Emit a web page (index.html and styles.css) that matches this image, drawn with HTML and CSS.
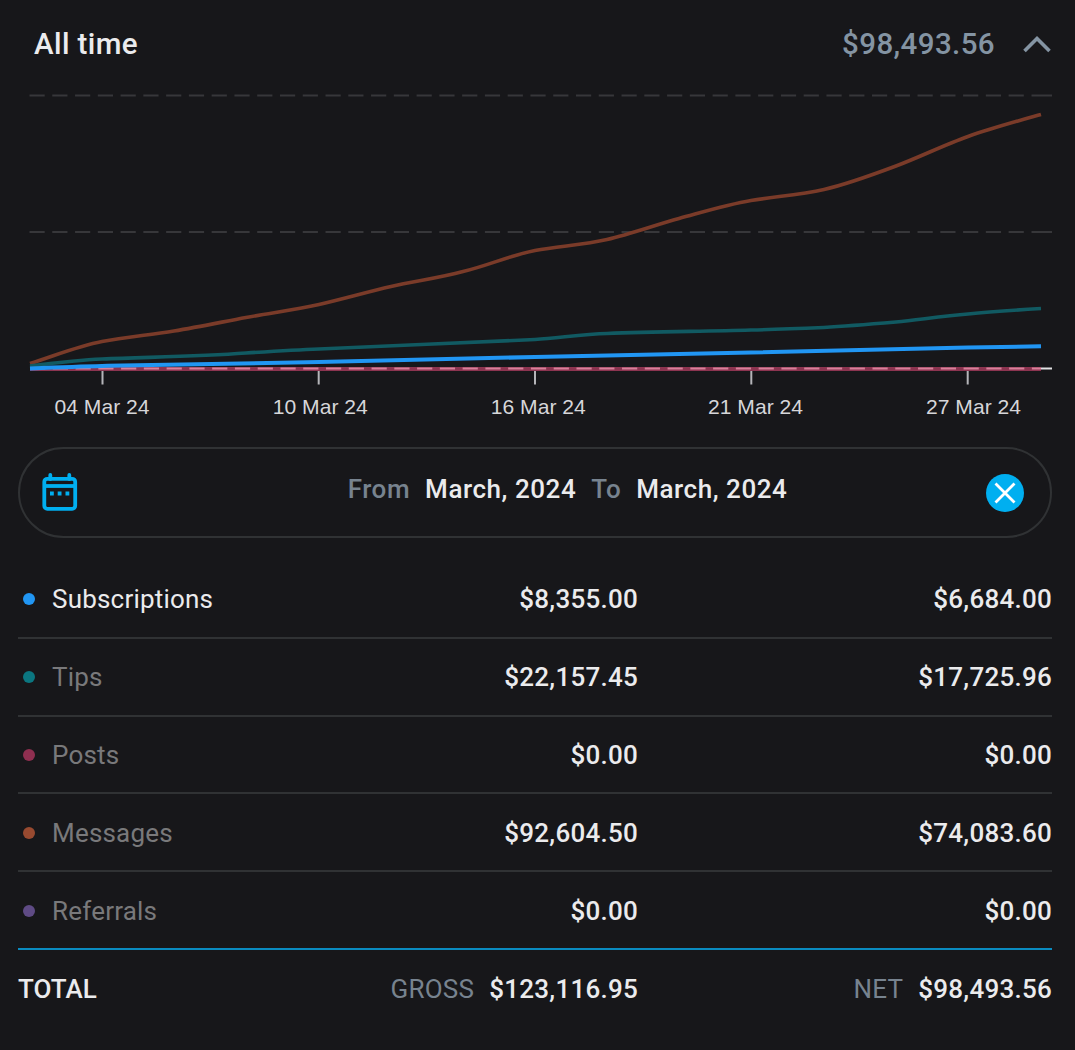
FILE: index.html
```html
<!DOCTYPE html>
<html lang="en">
<head>
  <meta charset="UTF-8" />
  <meta name="viewport" content="width=device-width, initial-scale=1.0" />
  <title>Earnings - All time</title>
  <link rel="stylesheet" href="styles.css">
</head>
<body>
  <main class="panel">
    <header class="panel-header">
      <h1 class="panel-title">All time</h1>
      <div class="panel-sum">
        <span class="sum-value">$98,493.56</span>
        <svg class="chevron" width="30" height="20" viewBox="0 0 30 20">
          <path d="M2.5 17 L15 4.500 L27.5 17" />
        </svg>
      </div>
    </header>

    <svg class="chart" width="1075" height="350" viewBox="0 80 1075 350">
      <!-- grid -->
      <path class="grid" d="M29.5 95.5 H1030" />
      <path class="grid-end" d="M1031.5 95.5 H1052" />
      <path class="grid" d="M29.5 232 H1030" />
      <path class="grid-end" d="M1031.5 232 H1052" />

      <!-- series -->
      <path class="line messages" d="M30 363.5 C54 356 78 346 102 341.5 C126 337 150 335 174 331 C198 327 222 322 246 317.5 C270 313 294 310 319 304.5 C343 299 367 292 391 286.5 C415 281 439 278 463 271.5 C487 266 511 255 535 250.5 C559 246 583 245 607 239.5 C631 234 655 225 679 218.5 C703 212 727 204.5 751 200.5 C775 196.5 800 195 824 189.5 C848 184 872 175 896 166 C920 157 944 145 968 136.5 C992 128 1016 121.5 1041 114.5" />
      <path class="line tips" d="M30 366 C54 363 78 360 102 359 C150 357 198 356.5 246 353 C270 351.5 294 350 319 349 C391 345.5 463 343 535 339.5 C559 338 583 334 607 333.5 C655 331.5 703 331.5 751 330 C775 329.5 800 328.5 824 327.5 C848 326 872 324 896 322 C920 319.5 944 316 968 314 C992 311.5 1016 310 1041 308.5" />
      <path class="line posts" d="M30 369 H1041" />
      <path class="axis-dash" d="M30 368.5 H1041" />
      <path class="line subs" d="M30 368.5 C54 367.5 78 366.5 102 366 C174 364 246 363 319 362 C391 360 463 358.5 535 357 C607 355 679 354 751 352.5 C824 351 896 349 968 347.5 L1041 346.3" />

      <!-- x axis -->
      <path class="axis" d="M1041 368.5 H1052" />
      <path class="tick" d="M102.5 371 V384.5 M318.7 371 V384.5 M535 371 V384.5 M751.3 371 V384.5 M967.7 371 V384.5" />
      <g class="axis-labels">
        <text x="102" y="414">04 Mar 24</text>
        <text x="320.3" y="414">10 Mar 24</text>
        <text x="538.3" y="414">16 Mar 24</text>
        <text x="755.5" y="414">21 Mar 24</text>
        <text x="973.5" y="414">27 Mar 24</text>
      </g>
    </svg>

    <div class="date-range">
      <svg class="calendar" width="36" height="40" viewBox="0 0 36 40">
        <rect x="2.3" y="5.8" width="30.9" height="30" rx="3" />
        <path d="M2.3 13 H33.2" />
        <path class="rings" d="M8.3 2 V6 M27.3 2 V6" />
        <path class="dots" d="M8 20.5 H11.8 M15.7 20.5 H19.5 M23.5 20.5 H27.3" />
      </svg>
      <p class="range-text">
        <span class="muted">From</span>
        <span class="month">March, 2024</span>
        <span class="muted">To</span>
        <span class="month">March, 2024</span>
      </p>
      <svg class="clear" width="38" height="38" viewBox="0 0 38 38">
        <circle cx="19" cy="19" r="19" />
        <path d="M9.5 9.5 L28.5 28.5 M28.5 9.5 L9.5 28.5" />
      </svg>
    </div>

    <section class="earnings">
      <div class="row active">
        <span class="name"><i class="dot dot-subs"></i>Subscriptions</span>
        <span class="amount">$8,355.00</span>
        <span class="amount">$6,684.00</span>
      </div>
      <div class="row">
        <span class="name"><i class="dot dot-tips"></i>Tips</span>
        <span class="amount">$22,157.45</span>
        <span class="amount">$17,725.96</span>
      </div>
      <div class="row">
        <span class="name"><i class="dot dot-posts"></i>Posts</span>
        <span class="amount">$0.00</span>
        <span class="amount">$0.00</span>
      </div>
      <div class="row">
        <span class="name"><i class="dot dot-messages"></i>Messages</span>
        <span class="amount">$92,604.50</span>
        <span class="amount">$74,083.60</span>
      </div>
      <div class="row last">
        <span class="name"><i class="dot dot-referrals"></i>Referrals</span>
        <span class="amount">$0.00</span>
        <span class="amount">$0.00</span>
      </div>
      <div class="row total">
        <span class="total-label">TOTAL</span>
        <span class="amount"><span class="caption">GROSS</span>$123,116.95</span>
        <span class="amount"><span class="caption">NET</span>$98,493.56</span>
      </div>
    </section>
  </main>
</body>
</html>
```
FILE: styles.css
```css
:root {
  --bg: #17171a;
  --text: #ebebed;
  --muted: #8494a3;
  --border: #303234;
  --accent: #00aff0;
  --subs: #2196f3;
  --tips: #0b7680;
  --posts: #8f2f50;
  --messages: #984a30;
  --referrals: #5f4b85;
}

* {
  margin: 0;
  padding: 0;
  box-sizing: border-box;
}

body {
  font-family: Roboto, sans-serif;
  background-color: var(--bg);
  color: var(--text);
}

.panel {
  width: 1075px;
  height: 1050px;
  overflow: hidden;
}

.panel-header {
  display: flex;
  justify-content: space-between;
  align-items: center;
  height: 80px;
  padding: 8px 23px 0 34px;
}

.panel-title,
.sum-value {
  font-size: 29.5px;
  font-weight: 500;
  letter-spacing: 0.4px;
}

.panel-sum {
  display: flex;
  align-items: center;
  gap: 27px;
  color: var(--muted);
}

.chevron {
  fill: none;
  stroke: var(--muted);
  stroke-width: 3.6;
}

/* chart */
.chart {
  display: block;
}

.chart path {
  fill: none;
}

.grid,
.grid-end {
  stroke: #37373a;
  stroke-width: 2;
}

.grid {
  stroke-dasharray: 15.2 7.57;
}

.line {
  stroke-width: 3.6;
}

.messages { stroke: #7a3b29; }
.tips { stroke: #115a62; }
.posts { stroke: #8c3450; stroke-width: 4; }
.subs { stroke: var(--subs); stroke-width: 4; }

.axis-dash {
  stroke: #d8809a;
  stroke-width: 1.8;
  stroke-dasharray: 15.2 7.57;
}

.axis {
  stroke: #e2e2e4;
  stroke-width: 2;
}

.tick {
  stroke: #b5b5b9;
  stroke-width: 2;
}

.axis-labels {
  font-family: "Liberation Sans", Arial, sans-serif;
  font-size: 21.1px;
  fill: #d6d6d9;
  text-anchor: middle;
}

/* date range */
.date-range {
  display: flex;
  align-items: center;
  width: 1034px;
  height: 91px;
  margin: 17px 0 0 18px;
  padding: 0 26px 0 22px;
  border: 2px solid var(--border);
  border-radius: 46px;
}

.calendar {
  fill: none;
  stroke: var(--accent);
  stroke-width: 3.8;
}

.calendar .rings {
  stroke-linecap: round;
}

.calendar .dots {
  stroke-width: 4;
}

.range-text {
  display: flex;
  flex: 1;
  justify-content: center;
  gap: 15px;
  padding: 0 0 7px 71px;
  font-size: 26px;
  font-weight: 500;
  letter-spacing: 0.55px;
}

.muted {
  color: #77838f;
}

.clear circle {
  fill: var(--accent);
}

.clear path {
  stroke: #fff;
  stroke-width: 2.8;
}

/* earnings table */
.earnings {
  padding: 23px 23px 0 18px;
}

.row {
  display: grid;
  grid-template-columns: 320px 300px 414px;
  align-items: center;
  height: 77.8px;
  padding-top: 1px;
  border-bottom: 2px solid var(--border);
  font-size: 26px;
  letter-spacing: 0.25px;
}

.row.last {
  border-bottom-color: #0a8bc0;
}

.row.total {
  padding-top: 0;
  border-bottom: 0;
}

.name {
  display: flex;
  align-items: center;
  color: #79797b;
  letter-spacing: 0.2px;
}

.active .name {
  color: var(--text);
}

.dot {
  width: 12px;
  height: 12px;
  margin: 0 17px 0 5px;
  border-radius: 50%;
}

.dot-subs { background: var(--subs); }
.dot-tips { background: var(--tips); }
.dot-posts { background: var(--posts); }
.dot-messages { background: var(--messages); }
.dot-referrals { background: var(--referrals); }

.amount {
  font-weight: 500;
  text-align: right;
}

.total-label {
  font-weight: 500;
  letter-spacing: 0;
}

.caption {
  margin-right: 15px;
  color: #77838f;
  font-weight: 400;
}
```
